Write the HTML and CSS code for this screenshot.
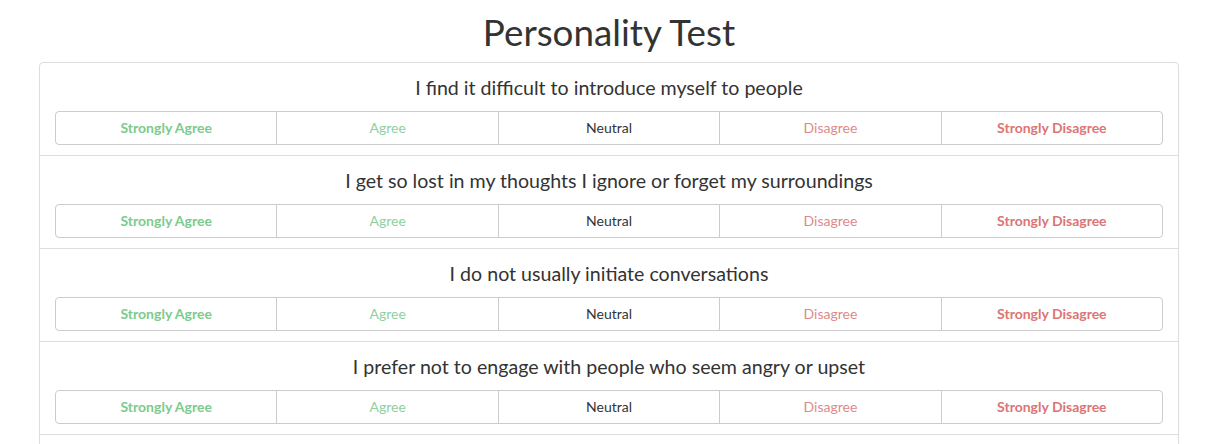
FILE: index.html
```html
<!DOCTYPE html>
<html lang="en">
<head>
<meta charset="utf-8">
<title>Personality Test</title>
<link rel="stylesheet" href="styles.css">
</head>
<body>
<div class="page">
  <h1 class="title">Personality Test</h1>
  <ul class="questions">
    <li class="question">
      <p class="question-text">I find it difficult to introduce myself to people</p>
      <div class="answers">
        <button class="answer strongly-agree">Strongly Agree</button>
        <button class="answer agree">Agree</button>
        <button class="answer neutral">Neutral</button>
        <button class="answer disagree">Disagree</button>
        <button class="answer strongly-disagree">Strongly Disagree</button>
      </div>
    </li>
    <li class="question">
      <p class="question-text">I get so lost in my thoughts I ignore or forget my surroundings</p>
      <div class="answers">
        <button class="answer strongly-agree">Strongly Agree</button>
        <button class="answer agree">Agree</button>
        <button class="answer neutral">Neutral</button>
        <button class="answer disagree">Disagree</button>
        <button class="answer strongly-disagree">Strongly Disagree</button>
      </div>
    </li>
    <li class="question">
      <p class="question-text">I do not usually initiate conversations</p>
      <div class="answers">
        <button class="answer strongly-agree">Strongly Agree</button>
        <button class="answer agree">Agree</button>
        <button class="answer neutral">Neutral</button>
        <button class="answer disagree">Disagree</button>
        <button class="answer strongly-disagree">Strongly Disagree</button>
      </div>
    </li>
    <li class="question">
      <p class="question-text">I prefer not to engage with people who seem angry or upset</p>
      <div class="answers">
        <button class="answer strongly-agree">Strongly Agree</button>
        <button class="answer agree">Agree</button>
        <button class="answer neutral">Neutral</button>
        <button class="answer disagree">Disagree</button>
        <button class="answer strongly-disagree">Strongly Disagree</button>
      </div>
    </li>
    <li class="question question-next"></li>
  </ul>
</div>
</body>
</html>
```

FILE: styles.css
```css
html {
  overflow: hidden;
}

body {
  margin: 0;
  padding: 0 42px 0 39px;
  background: #fff;
  font-family: Lato, "Open Sans", sans-serif;
  color: #333;
}

.page {
  width: 1140px;
}

.title {
  margin: 12px 0 10px;
  font-size: 36.8px;
  line-height: 40px;
  font-weight: 400;
  text-align: center;
  color: #333;
}

.questions {
  list-style: none;
  margin: 0;
  padding: 0;
  border: 1px solid #ddd;
  border-radius: 4px 4px 0 0;
}

.question {
  padding: 10px 15px;
  border-top: 1px solid #ddd;
}

.question:first-child {
  border-top: none;
}

.question-next {
  height: 60px;
}

.question-text {
  margin: 0 0 9px;
  padding-top: 1px;
  font-size: 19.6px;
  line-height: 28px;
  text-align: center;
  color: #333;
}

.answers {
  display: flex;
}

.answer {
  flex: 1 1 0;
  height: 34px;
  margin: 0 0 0 -1px;
  padding: 0;
  border: 1px solid #ccc;
  border-radius: 0;
  background: #fff;
  font-family: Lato, "Open Sans", sans-serif;
  font-size: 14px;
  line-height: 20px;
  text-align: center;
  cursor: pointer;
}

.answer:first-child {
  margin-left: 0;
  border-radius: 4px 0 0 4px;
}

.answer:last-child {
  border-radius: 0 4px 4px 0;
}

.strongly-agree {
  color: #7ccb8c;
  font-weight: 700;
}

.agree {
  color: #8fd0a0;
}

.neutral {
  color: #333;
}

.disagree {
  color: #dd8a8a;
}

.strongly-disagree {
  color: #dc7575;
  font-weight: 700;
}
```
